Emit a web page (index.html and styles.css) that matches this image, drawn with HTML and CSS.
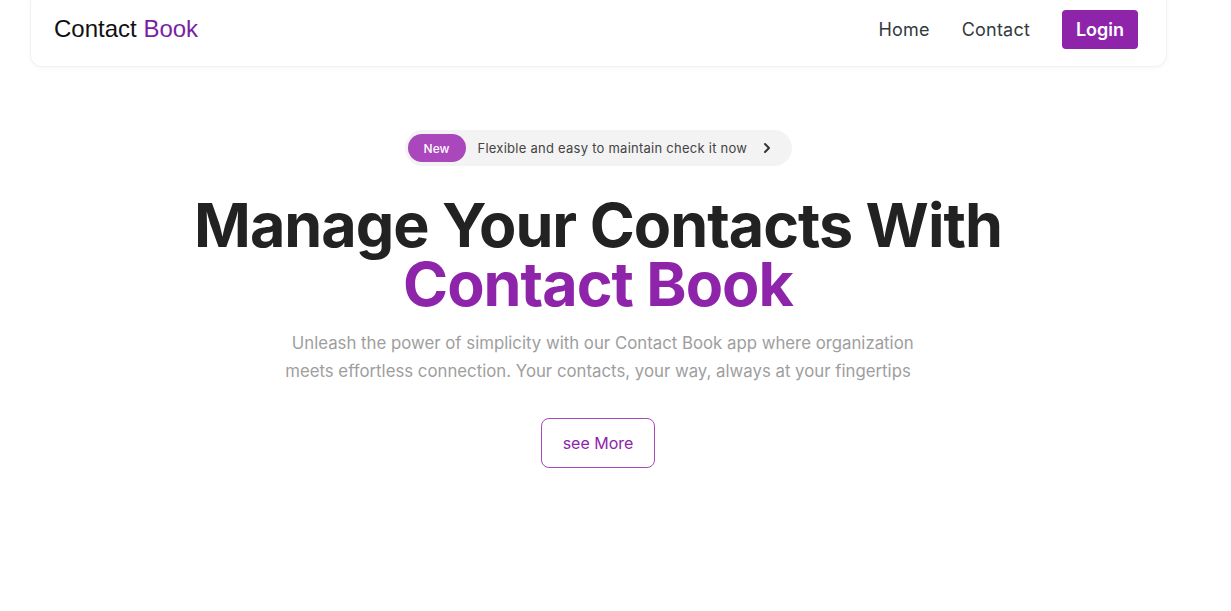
FILE: index.html
```html
<!DOCTYPE html>
<html lang="en">
<head>
<meta charset="utf-8">
<title>Contact Book</title>
<link rel="stylesheet" href="styles.css">
</head>
<body>
<div class="page">
  <header class="navbar">
    <div class="brand">Contact <span class="brand-accent">Book</span></div>
    <nav class="nav-links">
      <a class="nav-link" href="#">Home</a>
      <a class="nav-link" href="#">Contact</a>
      <a class="login-btn" href="#">Login</a>
    </nav>
  </header>
  <main class="hero">
    <div class="announce">
      <span class="announce-tag">New</span>
      <span class="announce-text">Flexible and easy to maintain check it now</span>
      <svg class="announce-chevron" width="10" height="12" viewBox="0 0 10 12"><path d="M3 2 L7 6 L3 10" fill="none" stroke="#333" stroke-width="2" stroke-linecap="round" stroke-linejoin="round"/></svg>
    </div>
    <h1 class="hero-title">Manage Your Contacts With<br><span class="hero-accent">Contact Book</span></h1>
    <p class="hero-text">&nbsp; Unleash the power of simplicity with our Contact Book app where organization meets effortless connection. Your contacts, your way, always at your fingertips</p>
    <a class="more-btn" href="#">see More</a>
  </main>
</div>
</body>
</html>
```
FILE: styles.css
```css
* { box-sizing: border-box; }
html, body { margin: 0; padding: 0; background: #fff; }
body { font-family: Inter, "Noto Sans", sans-serif; }
.page { width: 1196px; }
.navbar {
  margin: 0 29px 0 30px;
  height: 67px;
  background: #fff;
  border: 1px solid #f1f1f1;
  border-top: none;
  border-radius: 0 0 12px 12px;
  box-shadow: 0 2px 6px rgba(0,0,0,0.03);
  display: flex;
  align-items: center;
  justify-content: space-between;
  padding: 0 28px 8px 23px;
}
.brand { font-family: "Liberation Sans", Arial, sans-serif; font-size: 24px; color: #111; }
.brand-accent { color: #7b1fa2; }
.nav-links { display: flex; align-items: center; }
.nav-link { color: #333a40; text-decoration: none; font-size: 18px; margin-right: 32px; letter-spacing: 0.2px; }
.login-btn {
  background: #8e24aa; color: #fff; text-decoration: none; font-weight: 600;
  font-size: 18px; width: 76px; height: 39px; border-radius: 4px;
  display: flex; align-items: center; justify-content: center;
}
.hero { display: flex; flex-direction: column; align-items: center; padding-top: 63px; }
.announce {
  display: flex; align-items: center; background: #f3f3f3; border-radius: 18px;
  height: 36px; padding: 0 20px 0 3px; width: 387px;
}
.announce-tag {
  background: #ab47bc; color: #fff; font-size: 12px; font-weight: 500;
  width: 58px; height: 28px; border-radius: 14px; display: flex; align-items: center; justify-content: center;
}
.announce-text { font-size: 13px; color: #444; margin-left: 12px; flex: 1; letter-spacing: 0.25px; }
.announce-chevron { display: block; }
.hero-title {
  margin: 30px 0 0; text-align: center; font-size: 61px; line-height: 59px;
  font-weight: 700; color: #222; letter-spacing: -1px;
}
.hero-accent { color: #8e24aa; }
.hero-text {
  margin: 15px 0 0; width: 640px; text-align: center; font-size: 16.8px; line-height: 28px; color: #9e9e9e;
}
.more-btn {
  margin-top: 33px; width: 114px; height: 50px; border: 1px solid #ab47bc; border-radius: 8px;
  display: flex; align-items: center; justify-content: center; color: #8e24aa; text-decoration: none; font-size: 16px;
}
```
